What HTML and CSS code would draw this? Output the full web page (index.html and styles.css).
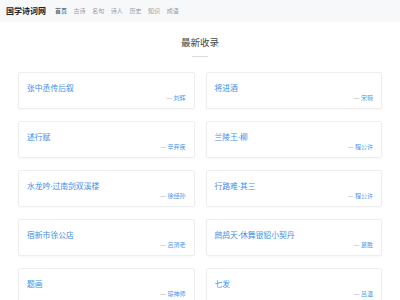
FILE: index.html
```html
<!DOCTYPE html>
<html lang="zh-CN">
<head>
    <meta charset="UTF-8">
    <meta name="viewport" content="width=device-width, initial-scale=1.0">
    <title>国学诗词网</title>
    <link rel="stylesheet" href="styles.css">
</head>
<body>
    <header class="site-header">
        <div class="logo">国学诗词网</div>
        <nav class="nav">
            <a class="active" href="#">首页</a>
            <a href="#">古诗</a>
            <a href="#">名句</a>
            <a href="#">诗人</a>
            <a href="#">历史</a>
            <a href="#">知识</a>
            <a href="#">成语</a>
        </nav>
    </header>

    <main class="latest">
        <h2 class="section-title">最新收录</h2>
        <div class="title-line"></div>

        <div class="poem-grid">
            <div class="poem-card">
                <div class="poem-title">张中丞传后叙</div>
                <div class="poem-author"><span class="dash">—</span> 刘辉</div>
            </div>
            <div class="poem-card">
                <div class="poem-title">将进酒</div>
                <div class="poem-author"><span class="dash">—</span> 宋琬</div>
            </div>
            <div class="poem-card">
                <div class="poem-title">述行赋</div>
                <div class="poem-author"><span class="dash">—</span> 辛弃疾</div>
            </div>
            <div class="poem-card">
                <div class="poem-title">兰陵王·柳</div>
                <div class="poem-author"><span class="dash">—</span> 程公许</div>
            </div>
            <div class="poem-card">
                <div class="poem-title">水龙吟·过南剑双溪楼</div>
                <div class="poem-author"><span class="dash">—</span> 徐经孙</div>
            </div>
            <div class="poem-card">
                <div class="poem-title">行路难·其三</div>
                <div class="poem-author"><span class="dash">—</span> 程公许</div>
            </div>
            <div class="poem-card">
                <div class="poem-title">宿新市徐公店</div>
                <div class="poem-author"><span class="dash">—</span> 吕渭老</div>
            </div>
            <div class="poem-card">
                <div class="poem-title">鹧鸪天·休舞银貂小契丹</div>
                <div class="poem-author"><span class="dash">—</span> 葛胜</div>
            </div>
            <div class="poem-card">
                <div class="poem-title">题画</div>
                <div class="poem-author"><span class="dash">—</span> 琼神师</div>
            </div>
            <div class="poem-card">
                <div class="poem-title">七发</div>
                <div class="poem-author"><span class="dash">—</span> 吕温</div>
            </div>
        </div>
    </main>
</body>
</html>
```

FILE: styles.css
```css
/* Reset */
* {
    margin: 0;
    padding: 0;
    box-sizing: border-box;
}

body {
    font-family: "Noto Sans", "Noto Sans CJK SC", sans-serif;
    background-color: #ffffff;
    color: #333333;
}

/* Header */
.site-header {
    display: flex;
    align-items: center;
    height: 22px;
    padding-left: 6px;
    background-color: #f7f8fa;
}

.logo {
    font-size: 8px;
    font-weight: bold;
    color: #222222;
    line-height: 12px;
}

.nav {
    display: flex;
    gap: 6.6px;
    margin-left: 9px;
}

.nav a {
    font-size: 6px;
    line-height: 10px;
    color: #9a9a9a;
    text-decoration: none;
}

.nav a.active {
    color: #444444;
}

/* Latest section */
.latest {
    padding: 14px 18px 0;
}

.section-title {
    font-size: 9.5px;
    font-weight: normal;
    line-height: 14px;
    text-align: center;
    color: #444444;
}

.title-line {
    width: 16px;
    height: 1px;
    margin: 6px auto 0;
    background-color: #dddddd;
}

.poem-grid {
    display: grid;
    grid-template-columns: 1fr 1fr;
    column-gap: 11px;
    row-gap: 12px;
    margin-top: 15px;
}

.poem-card {
    height: 37px;
    padding: 9px 8px 0;
    border: 1px solid #eeeeee;
    border-radius: 2px;
    box-shadow: 0 1px 2px rgba(0, 0, 0, 0.03);
}

.poem-title {
    font-size: 7.8px;
    line-height: 12px;
    color: #3d8fe8;
    white-space: nowrap;
}

.poem-author {
    font-size: 6px;
    line-height: 8px;
    text-align: right;
    color: #4a97ea;
}

.poem-author .dash {
    color: #aaaaaa;
}
```
